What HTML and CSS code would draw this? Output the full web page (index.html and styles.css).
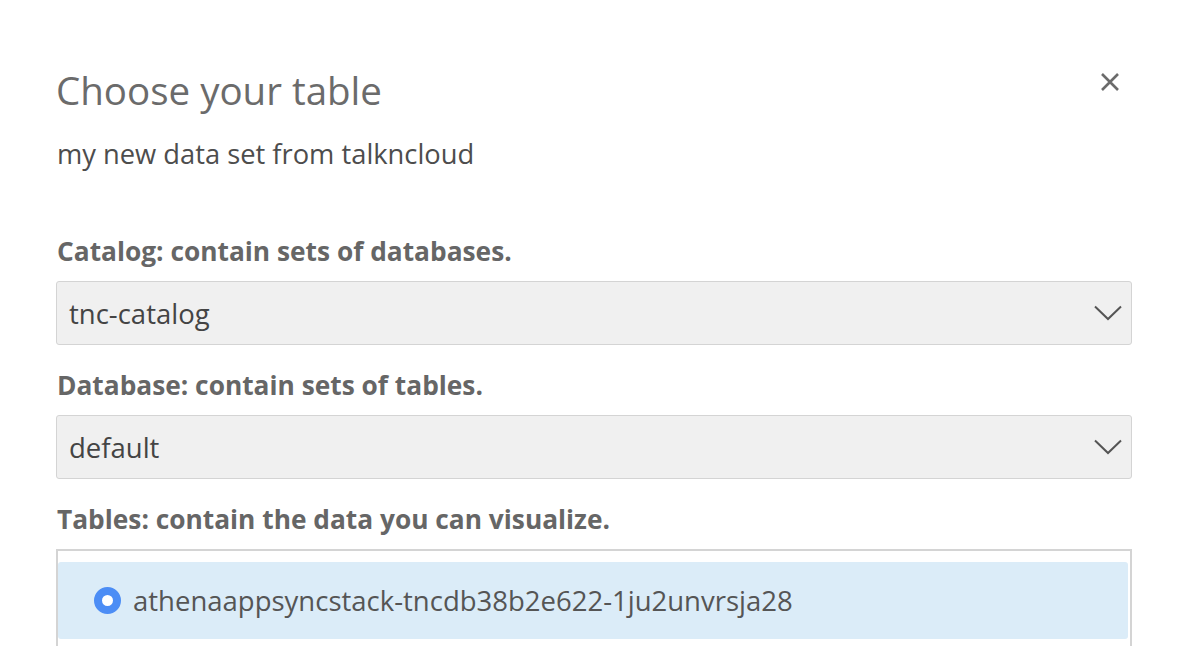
FILE: index.html
```html
<!DOCTYPE html>
<html>
<head>
<meta charset="utf-8">
<link rel="stylesheet" href="styles.css">
</head>
<body>
<div class="modal">
  <div class="header">
    <h1 class="title">Choose your table</h1>
    <button class="close" aria-label="Close">
      <svg width="20" height="20" viewBox="0 0 20 20"><path d="M2 2L18 18M18 2L2 18" stroke="#6b6b6b" stroke-width="2.6" stroke-linecap="butt"/></svg>
    </button>
  </div>
  <p class="subtitle">my new data set from talkncloud</p>
  <div class="field first">
    <label class="label">Catalog: contain sets of databases.</label>
    <div class="select"><span>tnc-catalog</span>
      <svg class="chev" width="28" height="16" viewBox="0 0 28 16"><path d="M1 1.5L14 14L27 1.5" fill="none" stroke="#555" stroke-width="2"/></svg>
    </div>
  </div>
  <div class="field">
    <label class="label">Database: contain sets of tables.</label>
    <div class="select"><span>default</span>
      <svg class="chev" width="28" height="16" viewBox="0 0 28 16"><path d="M1 1.5L14 14L27 1.5" fill="none" stroke="#555" stroke-width="2"/></svg>
    </div>
  </div>
  <div class="field">
    <label class="label">Tables: contain the data you can visualize.</label>
    <div class="list">
      <div class="row selected"><span class="radio"></span><span>athenaappsyncstack-tncdb38b2e622-1ju2unvrsja28</span></div>
    </div>
  </div>
</div>
</body>
</html>
```
FILE: styles.css
```css
html, body { margin: 0; padding: 0; background: #fff; }
body { font-family: "Open Sans", "Noto Sans", sans-serif; color: #666; overflow: hidden; height: 646px; }
.modal { padding: 58px 58px 0 56px; }
.header { display: flex; justify-content: space-between; align-items: flex-start; }
.title { margin: 0; font-size: 38.5px; font-weight: 400; color: #6b6b6b; line-height: 64px; }
.close { background: none; border: 0; padding: 0; margin: 14px 12px 0 0; width: 20px; height: 20px; }
.subtitle { margin: 14px 0 0 1px; font-size: 27.3px; color: #4d4d4d; line-height: 36px; }
.field { display: flex; flex-direction: column; }
.field.first { margin-top: 61px; }
.label { font-size: 26.3px; font-weight: 700; color: #666; line-height: 36px; margin: 0 0 12px 1px; }
.select { height: 62px; border: 1px solid #d4d4d4; border-radius: 3px; background: #f0f0f0; display: flex; align-items: center; justify-content: space-between; padding: 0 9px 0 12px; font-size: 27.5px; color: #444; margin-bottom: 22px; }
.list { border: 2px solid #d4d4d4; border-bottom: 0; padding: 11px 2px 0 0; height: 100px; }
.row { display: flex; align-items: center; height: 77px; padding-left: 36px; font-size: 27.5px; color: #555; border-radius: 3px; }
.row.selected { background: #dbecf8; }
.radio { flex: 0 0 auto; box-sizing: border-box; width: 27px; height: 27px; border-radius: 50%; border: 8.5px solid #4c8df5; background: #fff; margin-right: 12px; }
```
